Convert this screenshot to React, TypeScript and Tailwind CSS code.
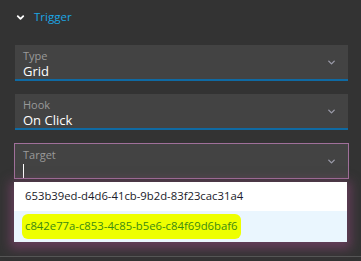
import { ChevronDown } from 'lucide-react'

const font = { fontFamily: '"Open Sans", "Noto Sans", sans-serif' }

function Field({ label, value, focused }: { label: string; value?: string; focused?: boolean }) {
  return (
    <div
      className={`flex items-center h-[36px] bg-[#434343] pl-[8px] pr-[11px] ${
        focused ? 'border border-[#a0709a] -mx-px' : 'border-b-2 border-[#0f6aa3]'
      }`}
    >
      <div className="flex-1 flex flex-col pt-[4px] self-stretch">
        <span className="text-[11px] text-[#9a9a9a] leading-[13px]">{label}</span>
        {focused ? (
          <span className="mt-[3px] h-[15px] w-px bg-white" />
        ) : (
          <span className="mt-px text-[13px] text-white leading-[16px]">{value}</span>
        )}
      </div>
      <ChevronDown size={11} strokeWidth={3} className="text-[#9a9aa8]" />
    </div>
  )
}

export default function App() {
  return (
    <div className="relative w-[361px] h-[261px] bg-[#333333] overflow-hidden" style={font}>
      <div className="flex items-center gap-[8px] h-[34px] pl-[15px]">
        <ChevronDown size={11} strokeWidth={4} className="text-white" />
        <span className="text-[11.5px] text-[#1ba6e4]">Trigger</span>
      </div>
      <div className="flex flex-col gap-[13px] pl-[15px] pr-[13px] pt-[11px]">
        <Field label="Type" value="Grid" />
        <Field label="Hook" value="On Click" />
        <Field label="Target" focused />
      </div>
      <div className="absolute left-[14px] top-[182px] w-[333px] bg-white shadow-[0_3px_10px_4px_rgba(140,70,120,0.55)] text-[11.3px]">
        <div className="h-[29px] flex items-center pl-[11px] text-[#1a1a2a]">
          653b39ed-d4d6-41cb-9b2d-83f23cac31a4
        </div>
        <div className="h-[31px] flex items-center pl-[8px] bg-[#eaf6fe]">
          <span className="bg-[#eeff00] text-[#3b8a12] px-[3px] py-[4px] rounded-[6px]">
            c842e77a-c853-4c85-b5e6-c84f69d6baf6
          </span>
        </div>
      </div>
      <div className="absolute left-0 right-0 top-[256px] h-px bg-[#555555]" />
    </div>
  )
}
